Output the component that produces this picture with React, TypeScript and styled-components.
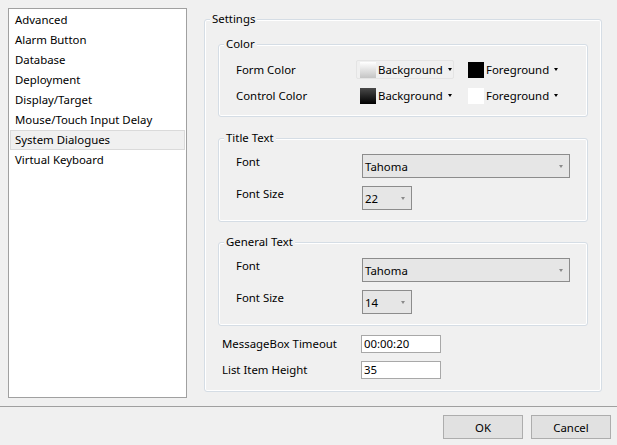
import React from 'react';
import styled, { createGlobalStyle } from 'styled-components';

const GlobalStyle = createGlobalStyle`
  html, body {
    margin: 0;
    padding: 0;
    background: #f0f0f0;
  }
  body {
    font-family: "Segoe UI", "Noto Sans", "Open Sans", sans-serif;
    font-size: 11.4px;
    color: #000;
  }
`;

const Window = styled.div`
  width: 617px;
  height: 445px;
  display: flex;
  flex-direction: column;
  background: #f0f0f0;
`;

const Main = styled.div`
  height: 406px;
  box-sizing: border-box;
  display: flex;
  gap: 17px;
  padding: 8px 15px 8px 8px;
`;

const NavList = styled.ul`
  flex: none;
  width: 179px;
  height: 390px;
  box-sizing: border-box;
  margin: 0;
  padding: 1px;
  list-style: none;
  background: #fff;
  border: 1px solid #a0a0a0;
`;

const NavItem = styled.li<{ $selected?: boolean }>`
  height: 20px;
  box-sizing: border-box;
  line-height: 18px;
  padding: 0 4px;
  border: 1px solid ${p => (p.$selected ? '#dadada' : 'transparent')};
  background: ${p => (p.$selected ? '#f0f0f0' : 'transparent')};
  white-space: nowrap;
`;

const SettingsColumn = styled.div`
  flex: 1;
  min-width: 0;
  padding-top: 3px;
`;

const GroupBox = styled.fieldset<{ $gap?: number }>`
  margin: ${p => p.$gap ?? 0}px 0 0 0;
  padding: 0;
  min-width: 0;
  border: 1px solid #d5dde5;
  border-radius: 3px;
  box-shadow: inset 0 0 0 1px #ffffff;
`;

const Legend = styled.legend`
  margin-left: 5px;
  padding: 0 2px;
  height: 16px;
  line-height: 16px;
  background: #f0f0f0;
`;

const SettingsBody = styled.div`
  padding: 9px 13px 12px 13px;
`;

const GroupBody = styled.div<{ $rowGap: number }>`
  display: flex;
  flex-direction: column;
  gap: ${p => p.$rowGap}px;
  padding: 8px 17px 11px 17px;
`;

const Row = styled.div`
  display: flex;
  align-items: center;
`;

const TopRow = styled.div`
  display: flex;
  align-items: flex-start;
`;

const Label = styled.span<{ $width: number }>`
  width: ${p => p.$width}px;
  flex: none;
  line-height: 16px;
  white-space: nowrap;
`;

const ColorButton = styled.div<{ $outlined?: boolean }>`
  width: 98px;
  flex: none;
  display: flex;
  align-items: center;
  height: 19px;
  box-sizing: border-box;
  padding: 0 4px 0 3px;
  margin-right: 10px;
  border: 1px solid ${p => (p.$outlined ? '#e4e4e4' : 'transparent')};
  border-radius: 2px;
`;

const Swatch = styled.span<{ $fill: string }>`
  width: 16px;
  height: 16px;
  flex: none;
  margin-right: 2px;
  background: ${p => p.$fill};
`;

const ButtonText = styled.span`
  line-height: 16px;
`;

const SmallArrow = styled.span<{ $color?: string }>`
  width: 0;
  height: 0;
  margin-left: 5px;
  border-left: 2.5px solid transparent;
  border-right: 2.5px solid transparent;
  border-top: 3px solid ${p => p.$color ?? '#000'};
`;

const Select = styled.div<{ $width: number }>`
  width: ${p => p.$width}px;
  height: 24px;
  box-sizing: border-box;
  display: flex;
  align-items: center;
  justify-content: space-between;
  padding: 0 6px 0 2px;
  background: #e6e6e6;
  border: 1px solid #8c8c8c;
`;

const TextInput = styled.div`
  width: 80px;
  height: 18px;
  box-sizing: border-box;
  padding: 0 2px;
  line-height: 16px;
  background: #fff;
  border: 1px solid #a8a8a8;
`;

const FieldRows = styled.div`
  display: flex;
  flex-direction: column;
  gap: 8px;
  margin-top: 9px;
  padding-left: 4px;
`;

const BottomBar = styled.div`
  flex: 1;
  display: flex;
  justify-content: flex-end;
  align-items: flex-start;
  gap: 8px;
  padding: 8px 6px 0 0;
  border-top: 1px solid #a0a0a0;
`;

const DialogButton = styled.button`
  width: 80px;
  height: 24px;
  padding: 0;
  font: inherit;
  color: #000;
  background: #e1e1e1;
  border: 1px solid #adadad;
`;

const navItems = [
  'Advanced',
  'Alarm Button',
  'Database',
  'Deployment',
  'Display/Target',
  'Mouse/Touch Input Delay',
  'System Dialogues',
  'Virtual Keyboard',
];

function ColorPicker({ label, fill, outlined }: { label: string; fill: string; outlined?: boolean }) {
  return (
    <ColorButton $outlined={outlined}>
      <Swatch $fill={fill} />
      <ButtonText>{label}</ButtonText>
      <SmallArrow />
    </ColorButton>
  );
}

function FontGroup({ title, size, gap }: { title: string; size: string; gap: number }) {
  return (
    <GroupBox $gap={gap}>
      <Legend>{title}</Legend>
      <GroupBody $rowGap={8}>
        <TopRow>
          <Label $width={126}>Font</Label>
          <Select $width={210}>
            <span>Tahoma</span>
            <SmallArrow $color="#8a8a8a" />
          </Select>
        </TopRow>
        <TopRow>
          <Label $width={126}>Font Size</Label>
          <Select $width={50}>
            <span>{size}</span>
            <SmallArrow $color="#8a8a8a" />
          </Select>
        </TopRow>
      </GroupBody>
    </GroupBox>
  );
}

export default function App() {
  return (
    <Window>
      <GlobalStyle />
      <Main>
        <NavList>
          {navItems.map(item => (
            <NavItem key={item} $selected={item === 'System Dialogues'}>
              {item}
            </NavItem>
          ))}
        </NavList>

        <SettingsColumn>
          <GroupBox>
            <Legend>Settings</Legend>
            <SettingsBody>
              <GroupBox>
                <Legend>Color</Legend>
                <GroupBody $rowGap={7}>
                  <Row>
                    <Label $width={120}>Form Color</Label>
                    <ColorPicker label="Background" fill="linear-gradient(#ffffff, #c4c4c4)" outlined />
                    <ColorPicker label="Foreground" fill="#000000" />
                  </Row>
                  <Row>
                    <Label $width={120}>Control Color</Label>
                    <ColorPicker label="Background" fill="linear-gradient(#4a4a4a, #000000)" />
                    <ColorPicker label="Foreground" fill="#ffffff" />
                  </Row>
                </GroupBody>
              </GroupBox>

              <FontGroup title="Title Text" size="22" gap={13} />
              <FontGroup title="General Text" size="14" gap={12} />

              <FieldRows>
                <Row>
                  <Label $width={139}>MessageBox Timeout</Label>
                  <TextInput>00:00:20</TextInput>
                </Row>
                <Row>
                  <Label $width={139}>List Item Height</Label>
                  <TextInput>35</TextInput>
                </Row>
              </FieldRows>
            </SettingsBody>
          </GroupBox>
        </SettingsColumn>
      </Main>

      <BottomBar>
        <DialogButton>OK</DialogButton>
        <DialogButton>Cancel</DialogButton>
      </BottomBar>
    </Window>
  );
}
